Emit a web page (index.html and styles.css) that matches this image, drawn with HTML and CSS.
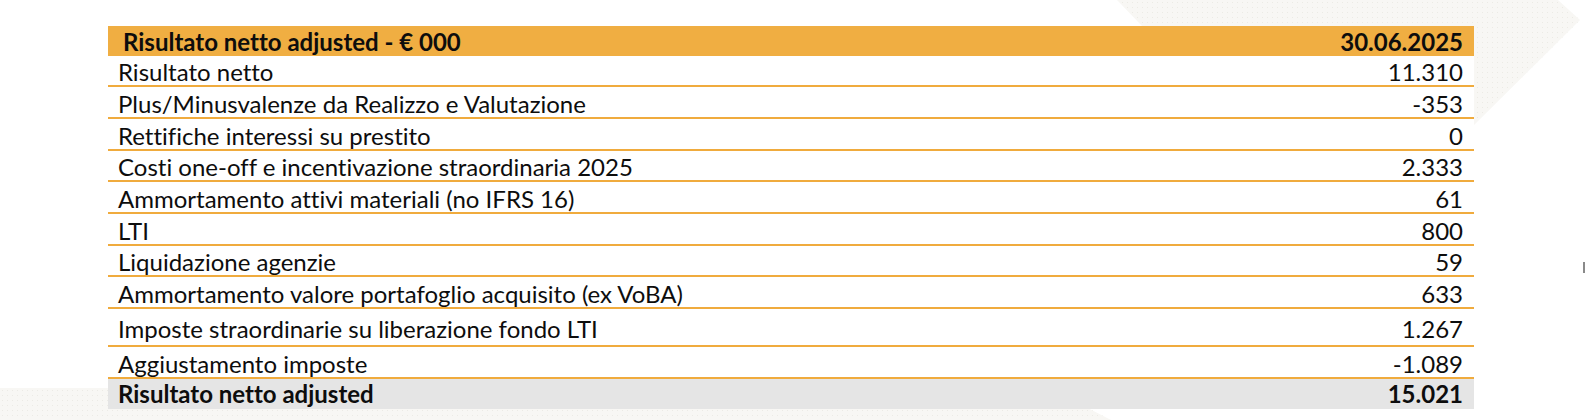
FILE: index.html
```html
<!DOCTYPE html>
<html lang="it">
<head>
<meta charset="utf-8">
<title>Risultato netto adjusted</title>
<link rel="stylesheet" href="styles.css">
</head>
<body>
<div class="page">
  <div class="deco deco-chevron"></div>
  <div class="deco deco-band"></div>
  <div class="deco deco-mark"></div>
  <div class="table">
    <div class="row head"><span class="label">Risultato netto adjusted - € 000</span><span class="val">30.06.2025</span></div>
    <div class="row"><span class="label">Risultato netto</span><span class="val">11.310</span></div>
    <div class="row"><span class="label">Plus/Minusvalenze da Realizzo e Valutazione</span><span class="val">-353</span></div>
    <div class="row"><span class="label">Rettifiche interessi su prestito</span><span class="val">0</span></div>
    <div class="row"><span class="label">Costi one-off e incentivazione straordinaria 2025</span><span class="val">2.333</span></div>
    <div class="row"><span class="label">Ammortamento attivi materiali (no IFRS 16)</span><span class="val">61</span></div>
    <div class="row"><span class="label">LTI</span><span class="val">800</span></div>
    <div class="row"><span class="label">Liquidazione agenzie</span><span class="val">59</span></div>
    <div class="row"><span class="label">Ammortamento valore portafoglio acquisito (ex VoBA)</span><span class="val">633</span></div>
    <div class="row tall"><span class="label">Imposte straordinarie su liberazione fondo LTI</span><span class="val">1.267</span></div>
    <div class="row"><span class="label">Aggiustamento imposte</span><span class="val">-1.089</span></div>
    <div class="row total"><span class="label">Risultato netto adjusted</span><span class="val">15.021</span></div>
  </div>
</div>
</body>
</html>
```

FILE: styles.css
```css
html, body {
  margin: 0;
  padding: 0;
  background: #ffffff;
}

.page {
  position: relative;
  width: 1586px;
  height: 420px;
  overflow: hidden;
  box-sizing: border-box;
  padding: 26px 0 0 108px;
  font-family: "Lato", "Open Sans", "Liberation Sans", sans-serif;
  font-variant-ligatures: none;
  color: #0d0d0d;
}

.deco {
  position: absolute;
  z-index: 0;
  background-color: #f8f7f4;
  background-image: radial-gradient(circle, #ecebe5 0.7px, transparent 0.9px);
  background-size: 5px 5px;
}

.deco-chevron {
  left: 1100px;
  top: 0;
  width: 486px;
  height: 260px;
  clip-path: polygon(17px 0, 253px 245px, 480px 20px, 458px 0);
}

.deco-band {
  left: 0;
  top: 388px;
  width: 1120px;
  height: 32px;
  clip-path: polygon(0 0, 1049px 0, 1111px 32px, 0 32px);
}

.deco-mark {
  left: 1583px;
  top: 262px;
  width: 2px;
  height: 11px;
  background: #8a8a8a;
}

.table {
  position: relative;
  z-index: 1;
  width: 1366px;
  display: flex;
  flex-direction: column;
}

.row {
  display: flex;
  justify-content: space-between;
  align-items: flex-end;
  box-sizing: border-box;
  height: 31.7px;
  padding: 0 11px 1px 10px;
  border-bottom: 2px solid #f0ab3d;
  font-size: 24px;
  line-height: 24px;
  background: #ffffff;
}

.row.head {
  height: 29.5px;
  padding-left: 15px;
  padding-bottom: 2px;
  border-bottom: none;
  background: #f0ae42;
  font-weight: 700;
}

.row.tall {
  height: 38px;
  padding-bottom: 4px;
}

.row.total {
  height: 30px;
  border-bottom: none;
  background: #e5e5e5;
  font-weight: 700;
  padding-bottom: 3px;
}
```
